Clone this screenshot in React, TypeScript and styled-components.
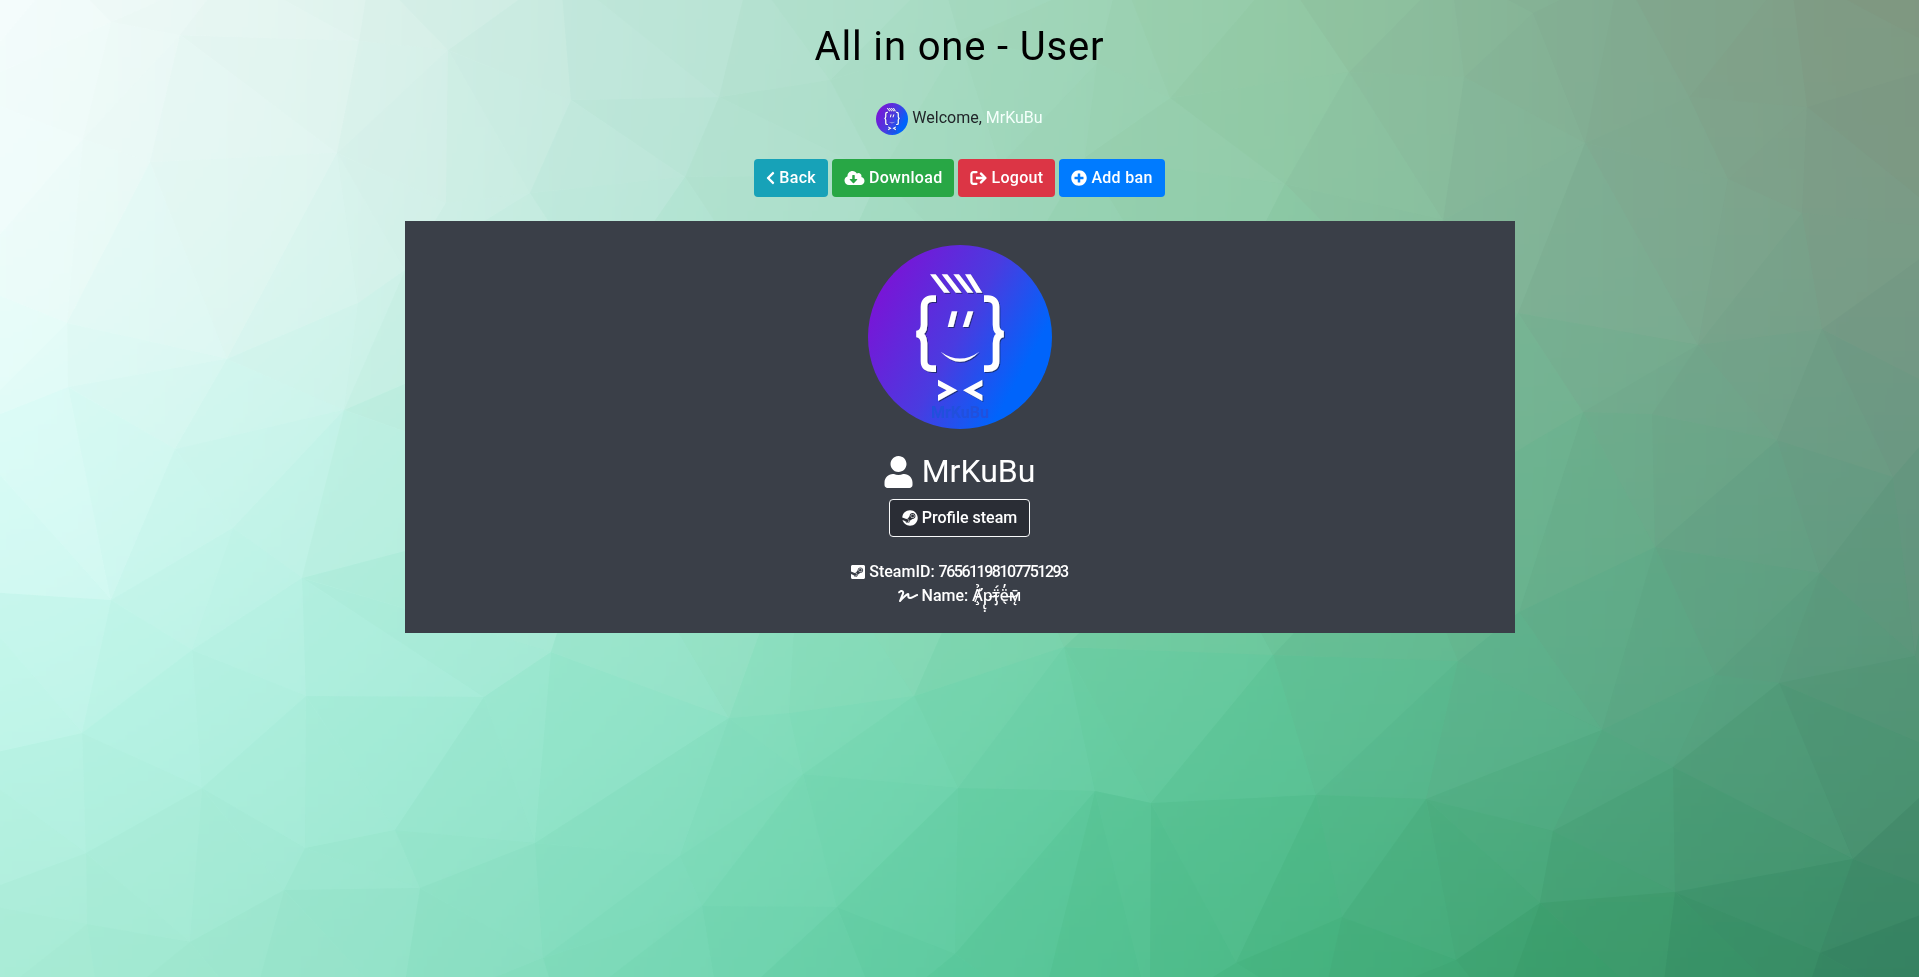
import React from 'react';
import styled, { createGlobalStyle } from 'styled-components';
import {
  FaChevronLeft,
  FaCloudDownloadAlt,
  FaPlusCircle,
  FaSignature,
  FaSteam,
  FaSteamSquare,
  FaUser,
} from 'react-icons/fa';

type Pt = [number, number];

// mesh points traced from the background, off-canvas ones close the edges
const MESH: Pt[] = [
  [111, 22], [180, 35], [359, 41], [83, 139], [150, 162], [337, 153], [67, 323], [227, 359], [358, 303], [68, 387],
  [175, 449], [344, 410], [405, 270],
  [111, 600], [233, 528], [302, 578], [192, 650], [306, 696], [484, 697], [551, 652], [82, 733], [202, 788],
  [305, 848], [395, 830], [535, 843], [86, 853], [284, 890], [420, 888], [190, 942], [87, 924], [543, 958],
  [729, 718], [789, 713], [914, 696], [1064, 647], [803, 774], [958, 788], [1095, 791], [1151, 803], [1273, 655],
  [680, 856], [702, 906], [837, 907], [955, 954], [1236, 963],
  [1655, 547], [1820, 573], [1519, 612], [1458, 661], [1715, 675], [1779, 683], [1915, 656], [1602, 730], [1673, 767],
  [1426, 799], [1316, 795], [1553, 831], [1853, 859], [1675, 892], [1540, 903], [1342, 917], [1456, 960], [1820, 953],
  [1533, 13], [1585, 143], [1689, 97], [1728, 179], [1807, 107], [1802, 213], [1698, 345], [1822, 329], [1518, 313],
  [1583, 412], [1652, 414], [1777, 440], [1893, 477],
  [448, 50], [571, 100], [719, 97], [685, 177], [530, 193], [446, 203], [830, 80], [960, 40], [1000, 165], [880, 175],
  [1170, 98], [1349, 72], [1285, 184], [1464, 77], [1443, 220], [1097, 63], [1085, 157],
  // under the panel
  [600, 300], [800, 350], [1000, 300], [1200, 350], [1400, 300], [600, 500], [800, 520], [1000, 500], [1200, 520], [1400, 520],
  // off canvas
  [-60, -60], [60, -30], [230, -30], [370, -30], [560, -30], [750, -30], [940, -30], [1120, -30], [1280, -30], [1450, -30], [1620, -30], [1790, -30], [1980, -60],
  [-40, 90], [-40, 280], [-40, 430], [-40, 590], [-40, 760], [-40, 900],
  [1960, 60], [1960, 230], [1960, 400], [1960, 760], [1960, 900],
  [-60, 1040], [100, 1015], [250, 1015], [400, 1015], [560, 1015], [720, 1015], [880, 1015], [1040, 1015], [1150, 1015], [1320, 1015], [1500, 1015], [1660, 1015], [1800, 1015], [1980, 1040],
];

// colours read off the reference, x = 0..1919 in 6 steps, y = 0..977 in 4 steps
const FIELD = [
  ['#f6fdfd', '#e2f4ef', '#bfe6da', '#a6dbc2', '#93c9a4', '#82ac91', '#7f9680'],
  ['#f0fdfb', '#dcf5ef', '#b9e6d8', '#a0d8bd', '#8ecaa6', '#7fae94', '#7a9985'],
  ['#dcfcf8', '#c2f3e8', '#a5e7cf', '#8ed9b5', '#76c69c', '#6aad8b', '#669580'],
  ['#bdf5e8', '#a9eedc', '#8fe3c7', '#72d5ae', '#5cc497', '#58ab87', '#4f9272'],
  ['#a8ebd5', '#96e3c9', '#78d8b6', '#58c89b', '#45b47f', '#389a68', '#338060'],
];

const rgb = (hex: string) => [1, 3, 5].map(i => parseInt(hex.slice(i, i + 2), 16));

const colorAt = (x: number, y: number) => {
  const fx = Math.min(5.999, Math.max(0, (x / 1919) * 6));
  const fy = Math.min(3.999, Math.max(0, (y / 977) * 4));
  const ix = Math.floor(fx);
  const iy = Math.floor(fy);
  const tx = fx - ix;
  const ty = fy - iy;
  const a = rgb(FIELD[iy][ix]);
  const b = rgb(FIELD[iy][ix + 1]);
  const c = rgb(FIELD[iy + 1][ix]);
  const d = rgb(FIELD[iy + 1][ix + 1]);
  const out = a.map((v, i) => Math.round(v * (1 - tx) * (1 - ty) + b[i] * tx * (1 - ty) + c[i] * (1 - tx) * ty + d[i] * tx * ty));
  return `rgb(${out.join(',')})`;
};

// Bowyer-Watson
const triangulate = (points: Pt[]) => {
  const pts: Pt[] = [...points, [-8000, -8000], [12000, -8000], [2000, 12000]];
  const n = points.length;
  let tris: number[][] = [[n, n + 1, n + 2]];
  const inCircle = (t: number[], p: Pt) => {
    const [ax, ay] = [pts[t[0]][0] - p[0], pts[t[0]][1] - p[1]];
    const [bx, by] = [pts[t[1]][0] - p[0], pts[t[1]][1] - p[1]];
    const [cx, cy] = [pts[t[2]][0] - p[0], pts[t[2]][1] - p[1]];
    const det =
      (ax * ax + ay * ay) * (bx * cy - cx * by) -
      (bx * bx + by * by) * (ax * cy - cx * ay) +
      (cx * cx + cy * cy) * (ax * by - bx * ay);
    const orient = (pts[t[1]][0] - pts[t[0]][0]) * (pts[t[2]][1] - pts[t[0]][1]) - (pts[t[1]][1] - pts[t[0]][1]) * (pts[t[2]][0] - pts[t[0]][0]);
    return orient > 0 ? det > 0 : det < 0;
  };
  points.forEach((p, idx) => {
    const bad = tris.filter(t => inCircle(t, p));
    const edges = new Map<string, number[]>();
    bad.forEach(t => {
      [[t[0], t[1]], [t[1], t[2]], [t[2], t[0]]].forEach(([a, b]) => {
        const key = a < b ? `${a}-${b}` : `${b}-${a}`;
        if (edges.has(key)) edges.set(key, []);
        else edges.set(key, [a, b]);
      });
    });
    tris = tris.filter(t => !bad.includes(t));
    edges.forEach(e => {
      if (e.length) tris.push([e[0], e[1], idx]);
    });
  });
  return tris.filter(t => t.every(i => i < n));
};

const FACETS = triangulate(MESH).map(t => {
  const [a, b, c] = t.map(i => MESH[i]);
  return {
    points: `${a[0]},${a[1]} ${b[0]},${b[1]} ${c[0]},${c[1]}`,
    fill: colorAt((a[0] + b[0] + c[0]) / 3, (a[1] + b[1] + c[1]) / 3),
  };
});

// coarse tiles, blurred into the smooth wash under the facets
const TILES: { x: number; y: number; fill: string }[] = [];
for (let y = -360; y < 1320; y += 120) {
  for (let x = -360; x < 2280; x += 120) {
    TILES.push({ x, y, fill: colorAt(x + 60, y + 60) });
  }
}

const GlobalStyle = createGlobalStyle`
  html, body {
    margin: 0;
    padding: 0;
    height: 100%;
    overflow: hidden;
    background: #a0d8bd;
  }
  body {
    font-family: Roboto, "Noto Sans", sans-serif;
    font-size: 16px;
    line-height: 1.5;
    color: #212529;
  }
`;

const Backdrop = styled.svg`
  position: fixed;
  inset: 0;
  width: 1919px;
  height: 977px;
  z-index: 0;
`;

const Page = styled.main`
  position: relative;
  z-index: 1;
  display: flex;
  flex-direction: column;
  align-items: center;
  padding-top: 23px;
`;

const Title = styled.h1`
  margin: 0 0 32px;
  font-size: 40px;
  font-weight: 400;
  line-height: 48px;
  letter-spacing: 0.85px;
  color: #000;
`;

const Welcome = styled.div`
  display: flex;
  align-items: center;
  gap: 4px;
  height: 32px;
  margin-bottom: 24px;
  font-size: 16px;
`;

const WelcomeText = styled.span`
  margin-top: -3px;
`;

const WelcomeName = styled.a`
  color: #f4fffb;
`;

const Toolbar = styled.div`
  display: flex;
  gap: 4px;
  margin-bottom: 24px;
`;

const Button = styled.a<{ $bg: string }>`
  display: inline-flex;
  align-items: center;
  gap: 4px;
  height: 38px;
  box-sizing: border-box;
  padding: 0 12px;
  border-radius: 4px;
  background: ${props => props.$bg};
  color: #fff;
  font-size: 16px;
  font-weight: 500;
  letter-spacing: 0.3px;
  cursor: pointer;

  svg {
    height: 16px;
    flex: none;
  }
`;

const BackIcon = styled(FaChevronLeft)`
  width: 9px;
`;

const CloudIcon = styled(FaCloudDownloadAlt)`
  width: 21px;
`;

const BanIcon = styled(FaPlusCircle)`
  width: 16px;
`;

const Panel = styled.section`
  width: 1110px;
  box-sizing: border-box;
  padding: 24px 0 25px;
  background: #3a3f48;
  color: #fff;
  display: flex;
  flex-direction: column;
  align-items: center;
`;

const UserName = styled.h2`
  display: flex;
  align-items: center;
  gap: 9px;
  height: 38px;
  margin: 24px 0 8px;
  font-size: 32px;
  font-weight: 400;
  line-height: 38px;

  svg {
    width: 29px;
    height: 32px;
  }
`;

const UserLabel = styled.span`
  margin-top: -3px;
`;

const ProfileButton = styled.a`
  display: inline-flex;
  align-items: center;
  gap: 4px;
  height: 38px;
  box-sizing: border-box;
  padding: 0 12px;
  border: 1px solid #f8f9fa;
  border-radius: 4px;
  background: #2a2d35;
  color: #fff;
  font-weight: 500;
  cursor: pointer;

  svg {
    width: 16px;
    height: 16px;
  }
`;

const Details = styled.div`
  margin-top: 23px;
  text-align: center;
  font-weight: 500;
`;

const DetailLine = styled.div`
  display: flex;
  justify-content: center;
  align-items: center;
  gap: 4px;
  height: 24px;

  svg {
    flex: none;
    height: 16px;
  }
`;

const SteamNumber = styled.span`
  letter-spacing: -1.5px;
`;

const SteamIcon = styled(FaSteamSquare)`
  width: 14px;
`;

const NameIcon = styled(FaSignature)`
  width: 20px;
`;

const LogoutIcon = () => (
  <svg viewBox="0 0 17 16" width="17" fill="none" stroke="currentColor">
    <path d="M6.5 2.2H3.4C2.2 2.2 1.4 3 1.4 4.2v7.6c0 1.2.8 2 2 2h3.1" strokeWidth="2.2" strokeLinecap="round" />
    <path d="M6 8h9" strokeWidth="2.6" />
    <path d="M11 3.6L15.4 8 11 12.4" strokeWidth="2.4" strokeLinecap="round" strokeLinejoin="round" />
  </svg>
);

const Avatar: React.FC<{ size: number; id: string }> = ({ size, id }) => (
  <svg width={size} height={size} viewBox="54 29 552 552" style={{ flex: 'none' }}>
    <defs>
      <linearGradient id={id} x1="0" y1="0.2" x2="1" y2="0.75">
        <stop offset="0.05" stopColor="#7a14d6" />
        <stop offset="0.5" stopColor="#4a3be0" />
        <stop offset="0.85" stopColor="#0064fb" />
      </linearGradient>
      <filter id={`${id}-s`} x="-10%" y="-10%" width="125%" height="125%">
        <feDropShadow dx="3" dy="3" stdDeviation="2" floodColor="#10204a" floodOpacity="0.7" />
      </filter>
    </defs>
    <circle cx="330" cy="305" r="276" fill={`url(#${id})`} />
    <text x="330" y="548" textAnchor="middle" fontSize="48" fontWeight="700" fill="#2150dc" fontFamily="Roboto, sans-serif">
      MrKuBu
    </text>
    <g filter={`url(#${id}-s)`}>
      <g fill="#fff">
        <path d="M240 117h17l43 55h-18z" />
        <path d="M275 117h17l43 55h-18z" />
        <path d="M310 117h17l43 55h-18z" />
        <path d="M345 117h17l35 55h-18z" />
        <path d="M305 228h17l-12 47h-17z" />
        <path d="M353 228h17l-15 47h-17z" />
        <path d="M272 349Q330 390 388 349Q330 410 272 349z" />
        <path d="M264 433L322 465L264 497V479L290 465L264 451z" />
        <path d="M397 433L339 465L397 497V479L371 465L397 451z" />
      </g>
      <g fill="none" stroke="#fff" strokeWidth="20">
        <path d="M258 190h-12c-14 0-24 8-24 24v54c0 16-8 26-22 28c14 2 22 12 22 28v54c0 16 10 22 24 22h12" />
        <path d="M402 190h12c14 0 24 8 24 24v54c0 16 8 26 22 28c-14 2-22 12-22 28v54c0 16-10 22-24 22h-12" />
      </g>
    </g>
  </svg>
);

const App: React.FC = () => (
  <>
    <GlobalStyle />
    <Backdrop viewBox="0 0 1919 977">
      <defs>
        <filter id="wash" filterUnits="userSpaceOnUse" x="-360" y="-360" width="2640" height="1680">
          <feGaussianBlur stdDeviation="70" />
        </filter>
      </defs>
      <g filter="url(#wash)">
        {TILES.map(t => (
          <rect key={`${t.x}-${t.y}`} x={t.x} y={t.y} width="121" height="121" fill={t.fill} />
        ))}
      </g>
      <g opacity="0.6">
        {FACETS.map(f => (
          <polygon key={f.points} points={f.points} fill={f.fill} />
        ))}
      </g>
    </Backdrop>
    <Page>
      <Title>All in one - User</Title>
      <Welcome>
        <Avatar size={32} id="small-avatar" />
        <WelcomeText>
          Welcome, <WelcomeName>MrKuBu</WelcomeName>
        </WelcomeText>
      </Welcome>
      <Toolbar>
        <Button $bg="#17a2b8"><BackIcon />Back</Button>
        <Button $bg="#28a745"><CloudIcon />Download</Button>
        <Button $bg="#dc3545"><LogoutIcon />Logout</Button>
        <Button $bg="#007bff"><BanIcon />Add ban</Button>
      </Toolbar>
      <Panel>
        <Avatar size={184} id="big-avatar" />
        <UserName><FaUser /><UserLabel>MrKuBu</UserLabel></UserName>
        <ProfileButton><FaSteam />Profile steam</ProfileButton>
        <Details>
          <DetailLine><SteamIcon /><span>SteamID: <SteamNumber>76561198107751293</SteamNumber></span></DetailLine>
          <DetailLine><NameIcon />Name: А̸̧̛̉р̵̢̣т̴̡̈́ё̶̖̓м̷̨̄</DetailLine>
        </Details>
      </Panel>
    </Page>
  </>
);

export default App;
